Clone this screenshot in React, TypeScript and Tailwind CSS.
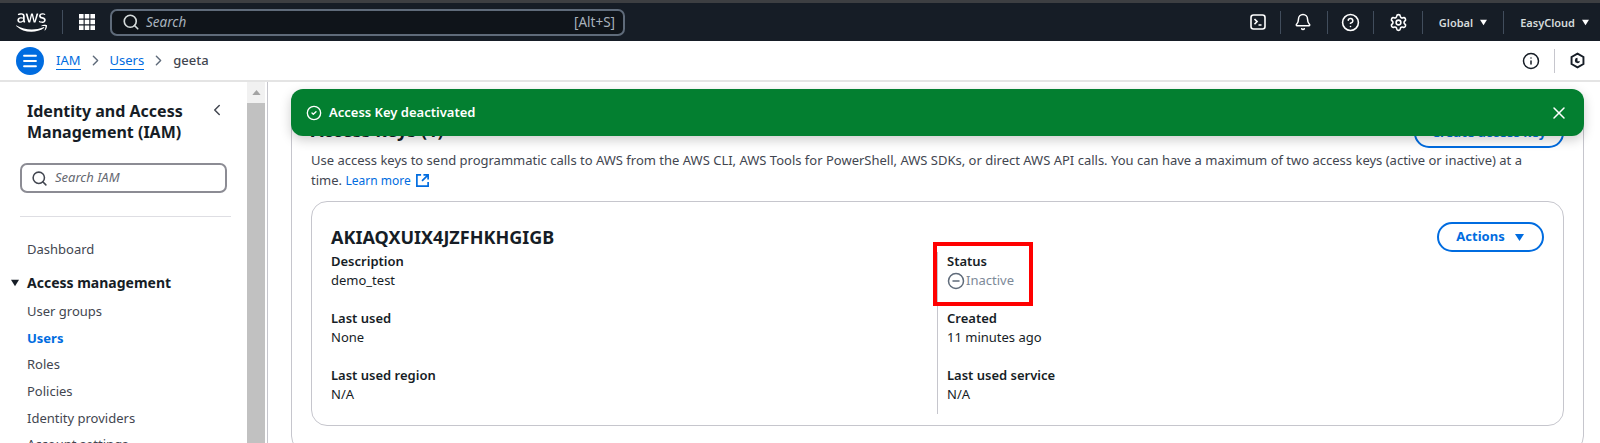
import { Bell, ChevronLeft, ChevronRight, CircleCheck, CircleHelp, CircleMinus, Info, Menu, Search, Settings, X } from 'lucide-react';
import { FaAws } from 'react-icons/fa';

const Caret = ({ className }: { className?: string }) => (
  <svg viewBox="0 0 12 10" className={className} fill="currentColor">
    <path d="M1 1h10L6 9z" />
  </svg>
);

const Sep = () => <div className="h-[23px] w-px bg-[#414d5c]" />;

function TopBar() {
  return (
    <header className="flex h-[41px] shrink-0 items-center border-t-[3px] border-[#3d3f42] bg-[#161d26] text-[#d5dbdb]">
      <FaAws className="ml-[16px] text-white" size={31} />
      <div className="ml-[15px] h-[24px] w-px bg-[#414d5c]" />
      <svg viewBox="0 0 14 14" className="ml-[16px] h-[16px] w-[16px] text-white" fill="currentColor">
        <path d="M0 0h4v4H0zM5 0h4v4H5zM10 0h4v4h-4zM0 5h4v4H0zM5 5h4v4H5zM10 5h4v4h-4zM0 10h4v4H0zM5 10h4v4H5zM10 10h4v4h-4z" />
      </svg>
      <div className="ml-[15px] flex h-[27px] w-[515px] items-center rounded-[7px] border-2 border-[#5f6b7a] bg-[#0f141a] pl-[10px] pr-[8px] text-[13.5px] text-[#a8b2bd]">
        <Search size={18} strokeWidth={2.2} className="text-[#d5dbdb]" />
        <span className="ml-[6px] italic">Search</span>
        <span className="ml-auto">[Alt+S]</span>
      </div>
      <div className="ml-auto flex items-center">
        <svg viewBox="0 0 16 16" className="h-[16px] w-[16px] text-white" fill="none" stroke="currentColor" strokeWidth="1.6">
          <rect x="1" y="1" width="14" height="14" rx="2.5" />
          <path d="M4.5 5l2.6 2.6-2.6 2.6M8.5 11h3" />
        </svg>
        <div className="ml-[14px] mr-[13px]"><Sep /></div>
        <Bell size={18} strokeWidth={2} className="text-white" />
        <div className="ml-[15px] mr-[13px]"><Sep /></div>
        <CircleHelp size={19} strokeWidth={2} className="text-white" />
        <div className="ml-[13px] mr-[15px]"><Sep /></div>
        <Settings size={19} strokeWidth={2} className="text-white" />
        <div className="ml-[14px] mr-[16px]"><Sep /></div>
        <span className="text-[11px] font-semibold leading-none">Global</span>
        <Caret className="ml-[6px] h-[7px] w-[9px] text-white" />
        <div className="ml-[15px] mr-[16px]"><Sep /></div>
        <span className="text-[11px] font-semibold leading-none">EasyCloud</span>
        <Caret className="ml-[6px] mr-[10px] h-[7px] w-[9px] text-white" />
      </div>
    </header>
  );
}

function Breadcrumbs() {
  return (
    <nav className="flex h-[41px] shrink-0 items-center border-b-2 border-[#e4e4e4] bg-white text-[13px]">
      <div className="ml-[16px] flex h-[28px] w-[28px] items-center justify-center rounded-full bg-[#006ce0] text-white">
        <Menu size={18} strokeWidth={2.4} />
      </div>
      <a className="ml-[12px] border-b border-[#006ce0] leading-[17px] text-[#006ce0]">IAM</a>
      <ChevronRight size={17} className="ml-[6px] text-[#5f6b7a]" />
      <a className="ml-[6px] border-b border-[#006ce0] leading-[17px] text-[#006ce0]">Users</a>
      <ChevronRight size={17} className="ml-[6px] text-[#5f6b7a]" />
      <span className="ml-[6px] font-medium text-[#424650]">geeta</span>
      <div className="ml-auto flex items-center text-[#161d26]">
        <Info size={18} strokeWidth={2} />
        <div className="mx-[14px] h-[24px] w-px bg-[#c6c6cd]" />
        <svg viewBox="0 0 16 16" className="mr-[14px] h-[17px] w-[17px]" fill="none" stroke="currentColor" strokeWidth="1.8">
          <path d="M8 1.5l5.6 3.2v6.6L8 14.5l-5.6-3.2V4.7z" />
          <path d="M8 5.5a2.5 2.5 0 1 0 2.4 3.2H8z" fill="currentColor" stroke="none" />
        </svg>
      </div>
    </nav>
  );
}

const navLinks = ['User groups', 'Users', 'Roles', 'Policies', 'Identity providers', 'Account settings'];

function Sidebar() {
  return (
    <aside className="flex w-[268px] shrink-0 border-r border-[#c6c6cd]">
      <div className="w-[247px] shrink-0 pt-[19px] text-[#424650]">
        <div className="flex items-start justify-between pl-[27px] pr-[21px]">
          <h2 className="text-[16px] font-bold leading-[21px] text-[#161d26]">
            Identity and Access
            <br />
            Management (IAM)
          </h2>
          <ChevronLeft size={18} className="text-[#424650]" />
        </div>
        <div className="ml-[20px] mt-[20px] flex h-[30px] w-[207px] items-center rounded-[7px] border-2 border-[#8c8c94] pl-[9px] text-[13px] italic text-[#656871]">
          <Search size={17} strokeWidth={2.2} className="text-[#424650]" />
          <span className="ml-[7px]">Search IAM</span>
        </div>
        <div className="ml-[20px] mt-[23px] h-px w-[211px] bg-[#dedee3]" />
        <div className="ml-[27px] mt-[22px] text-[13px] leading-[20px]">Dashboard</div>
        <div className="ml-[10px] mt-[14px] flex items-center text-[14px] font-bold leading-[20px] text-[#161d26]">
          <Caret className="h-[8px] w-[10px]" />
          <span className="ml-[7px]">Access management</span>
        </div>
        <ul className="ml-[27px] mt-[8px] flex flex-col gap-[6.7px] text-[13px] leading-[20px]">
          {navLinks.map((item) => (
            <li key={item} className={item === 'Users' ? 'font-bold text-[#006ce0]' : ''}>
              {item}
            </li>
          ))}
        </ul>
      </div>
      <div className="flex w-[18px] shrink-0 flex-col bg-[#f1f1f1]">
        <div className="flex h-[21px] items-center justify-center">
          <svg viewBox="0 0 10 6" className="h-[5px] w-[9px] text-[#a3a3a3]" fill="currentColor">
            <path d="M5 0l5 6H0z" />
          </svg>
        </div>
        <div className="flex-1 bg-[#c1c1c1]" />
      </div>
    </aside>
  );
}

function Field({ label, children }: { label: string; children: React.ReactNode }) {
  return (
    <div className="h-[57px] text-[13px] leading-[19px]">
      <div className="font-semibold text-[#161d26]">{label}</div>
      <div className="text-[#161d26]">{children}</div>
    </div>
  );
}

function AccessKeyCard() {
  return (
    <div className="relative ml-[19px] mr-[19px] mt-[11px] h-[225px] rounded-[16px] border border-[#c6c6cd] pl-[19px] pr-[19px] pt-[20px]">
      <div className="flex h-[30px] items-start justify-between">
        <h3 className="text-[18px] font-bold leading-[30px] text-[#161d26]">AKIAQXUIX4JZFHKHGIGB</h3>
        <button className="flex h-[30px] w-[107px] items-center justify-center rounded-full border-2 border-[#006ce0] text-[13px] font-bold text-[#006ce0]">
          Actions
          <Caret className="ml-[9px] h-[9px] w-[11px]" />
        </button>
      </div>
      <div className="grid grid-cols-[606px_1fr]">
        <div>
          <Field label="Description">demo_test</Field>
          <Field label="Last used">None</Field>
          <Field label="Last used region">N/A</Field>
        </div>
        <div className="h-[162px] border-l border-[#c6c6cd] pl-[9px]">
          <Field label="Status">
            <span className="flex items-center text-[#7d8998]">
              <CircleMinus size={18} strokeWidth={2} className="mr-[1px] text-[#5f6b7a]" />
              Inactive
            </span>
          </Field>
          <Field label="Created">11 minutes ago</Field>
          <Field label="Last used service">N/A</Field>
        </div>
      </div>
      {/* red annotation drawn over the screenshot */}
      <div className="absolute left-[621px] top-[40px] h-[64px] w-[100px] border-[4px] border-[#ff0000]" />
    </div>
  );
}

function AccessKeysPanel() {
  return (
    <section className="ml-[23px] mr-[16px] mt-[30px] h-[340px] rounded-[16px] border border-[#c6c6cd]">
      <div className="flex h-[38px] items-start justify-between pl-[19px] pr-[19px] pt-[5px]">
        <h2 className="text-[18px] font-bold leading-[24px] text-[#161d26]">Access keys (1)</h2>
        <button className="h-[30px] w-[150px] rounded-full border-2 border-[#006ce0] text-[13px] font-bold text-[#006ce0]">
          Create access key
        </button>
      </div>
      <p className="pl-[19px] pr-[52px] text-[13px] leading-[19.5px] text-[#424650]">
        Use access keys to send programmatic calls to AWS from the AWS CLI, AWS Tools for PowerShell, AWS SDKs, or direct AWS API calls. You can have a maximum of two access keys (active or inactive) at a time.{' '}
        <a className="inline-flex items-center text-[12px] text-[#006ce0]">
          Learn more
          <svg viewBox="0 0 16 16" className="ml-[4px] h-[15px] w-[15px]" fill="none" stroke="currentColor" strokeWidth="1.8">
            <path d="M6.5 2H2v12h12V9.5M9 2h5v5M14 2L7.5 8.5" />
          </svg>
        </a>
      </p>
      <AccessKeyCard />
    </section>
  );
}

export default function App() {
  return (
    <div className="flex h-[443px] w-[1600px] flex-col overflow-hidden bg-white font-['Noto_Sans',sans-serif]">
      <TopBar />
      <Breadcrumbs />
      <div className="relative flex min-h-0 flex-1">
        <Sidebar />
        <main className="min-w-0 flex-1">
          <AccessKeysPanel />
        </main>
        <div className="absolute left-[291px] top-[7px] flex h-[47px] w-[1293px] items-center rounded-[12px] bg-[#037f30] pl-[15px] pr-[15px] text-white shadow-[0_4px_12px_rgba(0,0,0,0.2)]">
          <CircleCheck size={16} strokeWidth={2} />
          <span className="ml-[7px] text-[13px] font-semibold">Access Key deactivated</span>
          <X size={20} strokeWidth={1.8} className="ml-auto" />
        </div>
      </div>
    </div>
  );
}
